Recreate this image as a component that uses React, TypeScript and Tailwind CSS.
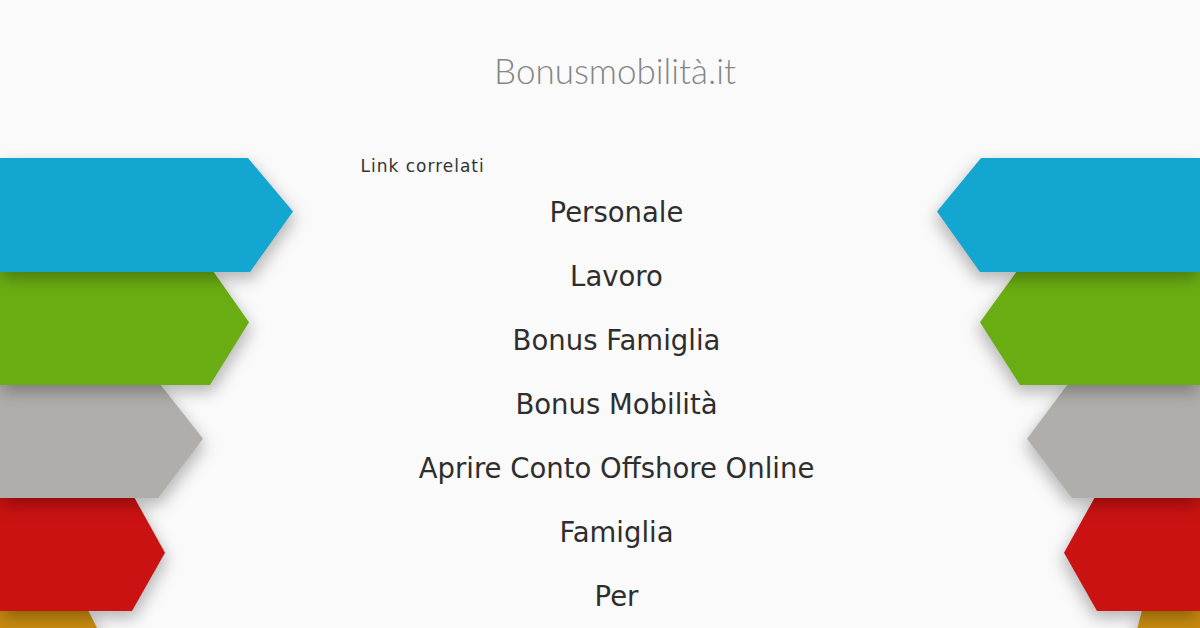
import React from 'react';

const LINKS = [
    'Personale',
    'Lavoro',
    'Bonus Famiglia',
    'Bonus Mobilità',
    'Aprire Conto Offshore Online',
    'Famiglia',
    'Per',
];

// Decorative arrow bands on the left (pointing right)
function LeftArrows() {
    return (
        <div className="flex flex-col items-start">
            <div className="relative z-50 [filter:drop-shadow(2px_7px_8px_rgba(0,0,0,0.28))]">
                <div className="w-[293px] h-[114px] bg-[#13a6d1] [clip-path:polygon(0_0,248px_0,293px_47%,250px_100%,0_100%)]" />
            </div>
            <div className="relative z-40 -mt-px [filter:drop-shadow(2px_7px_8px_rgba(0,0,0,0.28))]">
                <div className="w-[249px] h-[114px] bg-[#6aad13] [clip-path:polygon(0_0,213px_0,249px_45%,210px_100%,0_100%)]" />
            </div>
            <div className="relative z-30 -mt-px [filter:drop-shadow(2px_7px_8px_rgba(0,0,0,0.28))]">
                <div className="w-[203px] h-[114px] bg-[#afaeaa] [clip-path:polygon(0_0,160px_0,203px_48%,158px_100%,0_100%)]" />
            </div>
            <div className="relative z-20 -mt-px [filter:drop-shadow(2px_7px_8px_rgba(0,0,0,0.28))]">
                <div className="w-[165px] h-[114px] bg-[#cb1212] [clip-path:polygon(0_0,134px_0,165px_49%,132px_100%,0_100%)]" />
            </div>
            <div className="relative z-10 -mt-px [filter:drop-shadow(2px_7px_8px_rgba(0,0,0,0.28))]">
                <div className="w-[116px] h-[114px] bg-[#c88b10] [clip-path:polygon(0_0,88px_0,116px_49%,88px_100%,0_100%)]" />
            </div>
        </div>
    );
}

// Same bands on the right (pointing left)
function RightArrows() {
    return (
        <div className="flex flex-col items-end">
            <div className="relative z-50 [filter:drop-shadow(-2px_7px_8px_rgba(0,0,0,0.28))]">
                <div className="w-[263px] h-[114px] bg-[#13a6d1] [clip-path:polygon(0_47%,44px_0,100%_0,100%_100%,43px_100%)]" />
            </div>
            <div className="relative z-40 -mt-px [filter:drop-shadow(-2px_7px_8px_rgba(0,0,0,0.28))]">
                <div className="w-[220px] h-[114px] bg-[#6aad13] [clip-path:polygon(0_45%,37px_0,100%_0,100%_100%,40px_100%)]" />
            </div>
            <div className="relative z-30 -mt-px [filter:drop-shadow(-2px_7px_8px_rgba(0,0,0,0.28))]">
                <div className="w-[173px] h-[114px] bg-[#afaeaa] [clip-path:polygon(0_48%,41px_0,100%_0,100%_100%,45px_100%)]" />
            </div>
            <div className="relative z-20 -mt-px [filter:drop-shadow(-2px_7px_8px_rgba(0,0,0,0.28))]">
                <div className="w-[136px] h-[114px] bg-[#cb1212] [clip-path:polygon(0_49%,31px_0,100%_0,100%_100%,33px_100%)]" />
            </div>
            <div className="relative z-10 -mt-px [filter:drop-shadow(-2px_7px_8px_rgba(0,0,0,0.28))]">
                <div className="w-[72px] h-[114px] bg-[#c88b10] [clip-path:polygon(0_49%,14px_0,100%_0,100%_100%,14px_100%)]" />
            </div>
        </div>
    );
}

export default function App(): React.ReactNode {
    return (
        <div className="w-[1200px] h-[628px] overflow-hidden bg-[#fafafa]">
            <header className="h-[158px] pt-[48px] pl-[30px] text-center">
                <h1 className="text-[35px] leading-[44px] font-light text-[#858585] [font-family:Lato,'Open_Sans',sans-serif]">
                    Bonusmobilità.it
                </h1>
            </header>
            <div className="flex">
                <div className="w-[296px] shrink-0">
                    <LeftArrows />
                </div>
                <main className="flex-1 [font-family:'DejaVu_Sans',Verdana,sans-serif] text-[#333]">
                    <div className="w-[512px] mx-auto">
                        <p className="text-[17px] leading-[17px] tracking-[1px] text-[#333]">Link correlati</p>
                        <ul className="mt-[5px]">
                            {LINKS.map(link => (
                                <li key={link} className="h-16 leading-[64px] text-center text-[27.5px] text-[#2e2e2e]">
                                    <a href="#">{link}</a>
                                </li>
                            ))}
                        </ul>
                    </div>
                </main>
                <div className="w-[263px] shrink-0">
                    <RightArrows />
                </div>
            </div>
        </div>
    );
}
